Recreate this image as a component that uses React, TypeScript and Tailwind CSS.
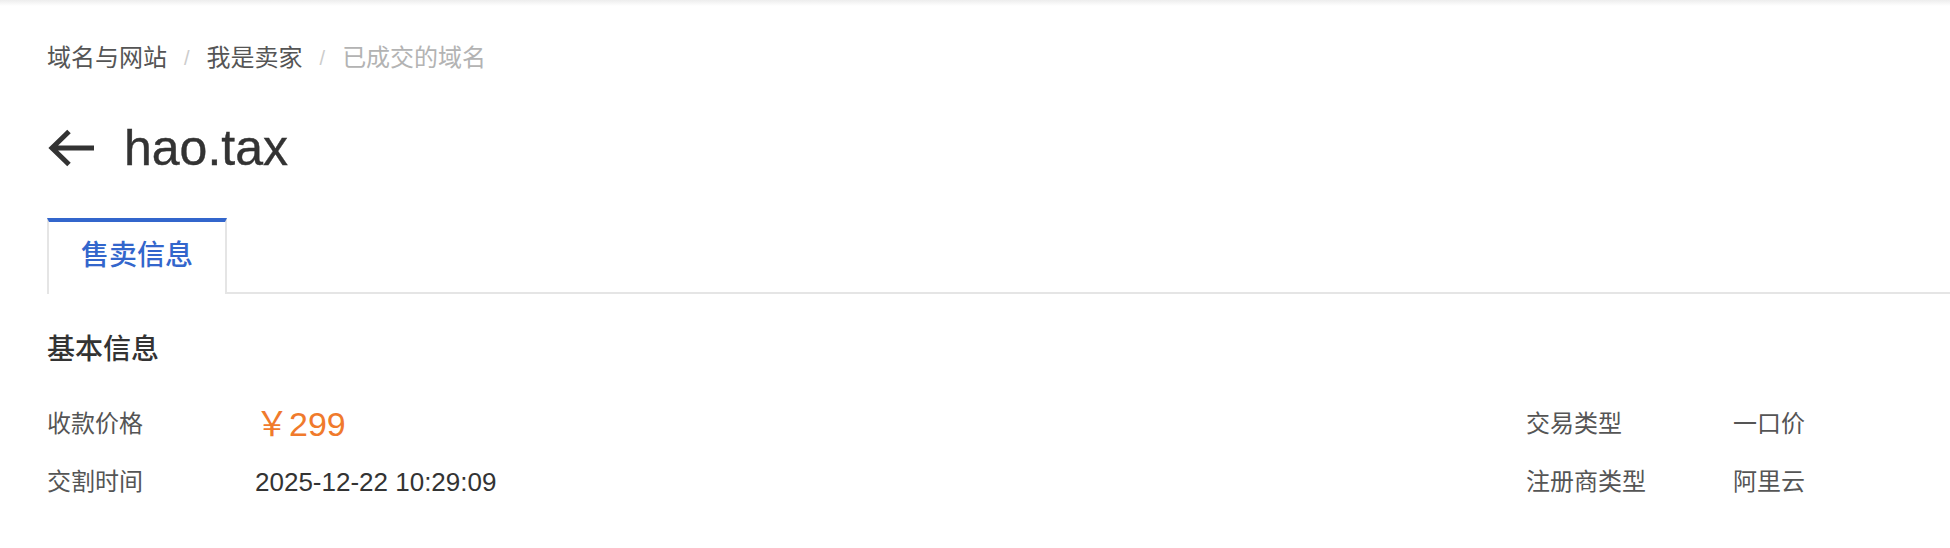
const crumbs = [
  { label: "域名与网站", muted: false },
  { label: "我是卖家", muted: false },
  { label: "已成交的域名", muted: true },
];

const BackArrow = () => (
  <svg width="48" height="38" viewBox="0 0 48 38" fill="none">
    <path
      d="M48 19H6M23 2.5L6 19L23 35.5"
      stroke="#333333"
      strokeWidth="5"
      strokeLinejoin="miter"
    />
  </svg>
);

const InfoItem = ({
  label,
  labelWidth,
  children,
}: {
  label: string;
  labelWidth: string;
  children: React.ReactNode;
}) => (
  <div className="flex h-[58px] items-center">
    <span className={`${labelWidth} shrink-0 text-[24px] leading-[36px] text-[#555555]`}>
      {label}
    </span>
    {children}
  </div>
);

export default function App() {
  return (
    <div className="min-h-[548px] bg-white font-['Liberation_Sans','Noto_Sans_CJK_SC',sans-serif]">
      <div className="h-[6px] bg-linear-to-b from-[#ededed] to-white" />

      <nav className="flex items-center pl-[47px] pt-[34px] text-[24px] leading-[36px]">
        {crumbs.map((c, i) => (
          <div key={c.label} className="flex items-center">
            {i > 0 && <span className="mx-[17px] text-[20px] text-[#cccccc]">/</span>}
            <span className={c.muted ? "text-[#b3b3b3]" : "text-[#555555]"}>{c.label}</span>
          </div>
        ))}
      </nav>

      <div className="mt-[44px] flex h-[56px] items-center gap-[30px] pl-[46px]">
        <BackArrow />
        <h1 className="text-[50px] leading-[56px] text-[#333333] [-webkit-text-stroke:0.4px_#333333]">
          hao.tax
        </h1>
      </div>

      <div className="ml-[47px] mt-[42px] flex border-b-2 border-[#e5e5e5]">
        <div className="-mb-[2px] border-x-2 border-t-4 border-x-[#e5e5e5] border-t-[#3366cc] bg-white px-[32px] pb-[18px] pt-[14px] text-[28px] font-medium leading-[40px] text-[#3366cc]">
          售卖信息
        </div>
      </div>

      <h2 className="mt-[36px] pl-[47px] text-[28px] font-medium leading-[40px] text-[#333333]">
        基本信息
      </h2>

      <div className="mt-[25px] grid grid-cols-[1fr_377px] px-[47px]">
        <InfoItem label="收款价格" labelWidth="w-[208px]">
          <span className="text-[34px] leading-[40px] text-[#f07a2c]">￥299</span>
        </InfoItem>
        <InfoItem label="交易类型" labelWidth="w-[207px]">
          <span className="text-[24px] leading-[36px] text-[#555555]">一口价</span>
        </InfoItem>
        <InfoItem label="交割时间" labelWidth="w-[208px]">
          <span className="text-[26px] leading-[36px] text-[#333333]">2025-12-22 10:29:09</span>
        </InfoItem>
        <InfoItem label="注册商类型" labelWidth="w-[207px]">
          <span className="text-[24px] leading-[36px] text-[#555555]">阿里云</span>
        </InfoItem>
      </div>
    </div>
  );
}
